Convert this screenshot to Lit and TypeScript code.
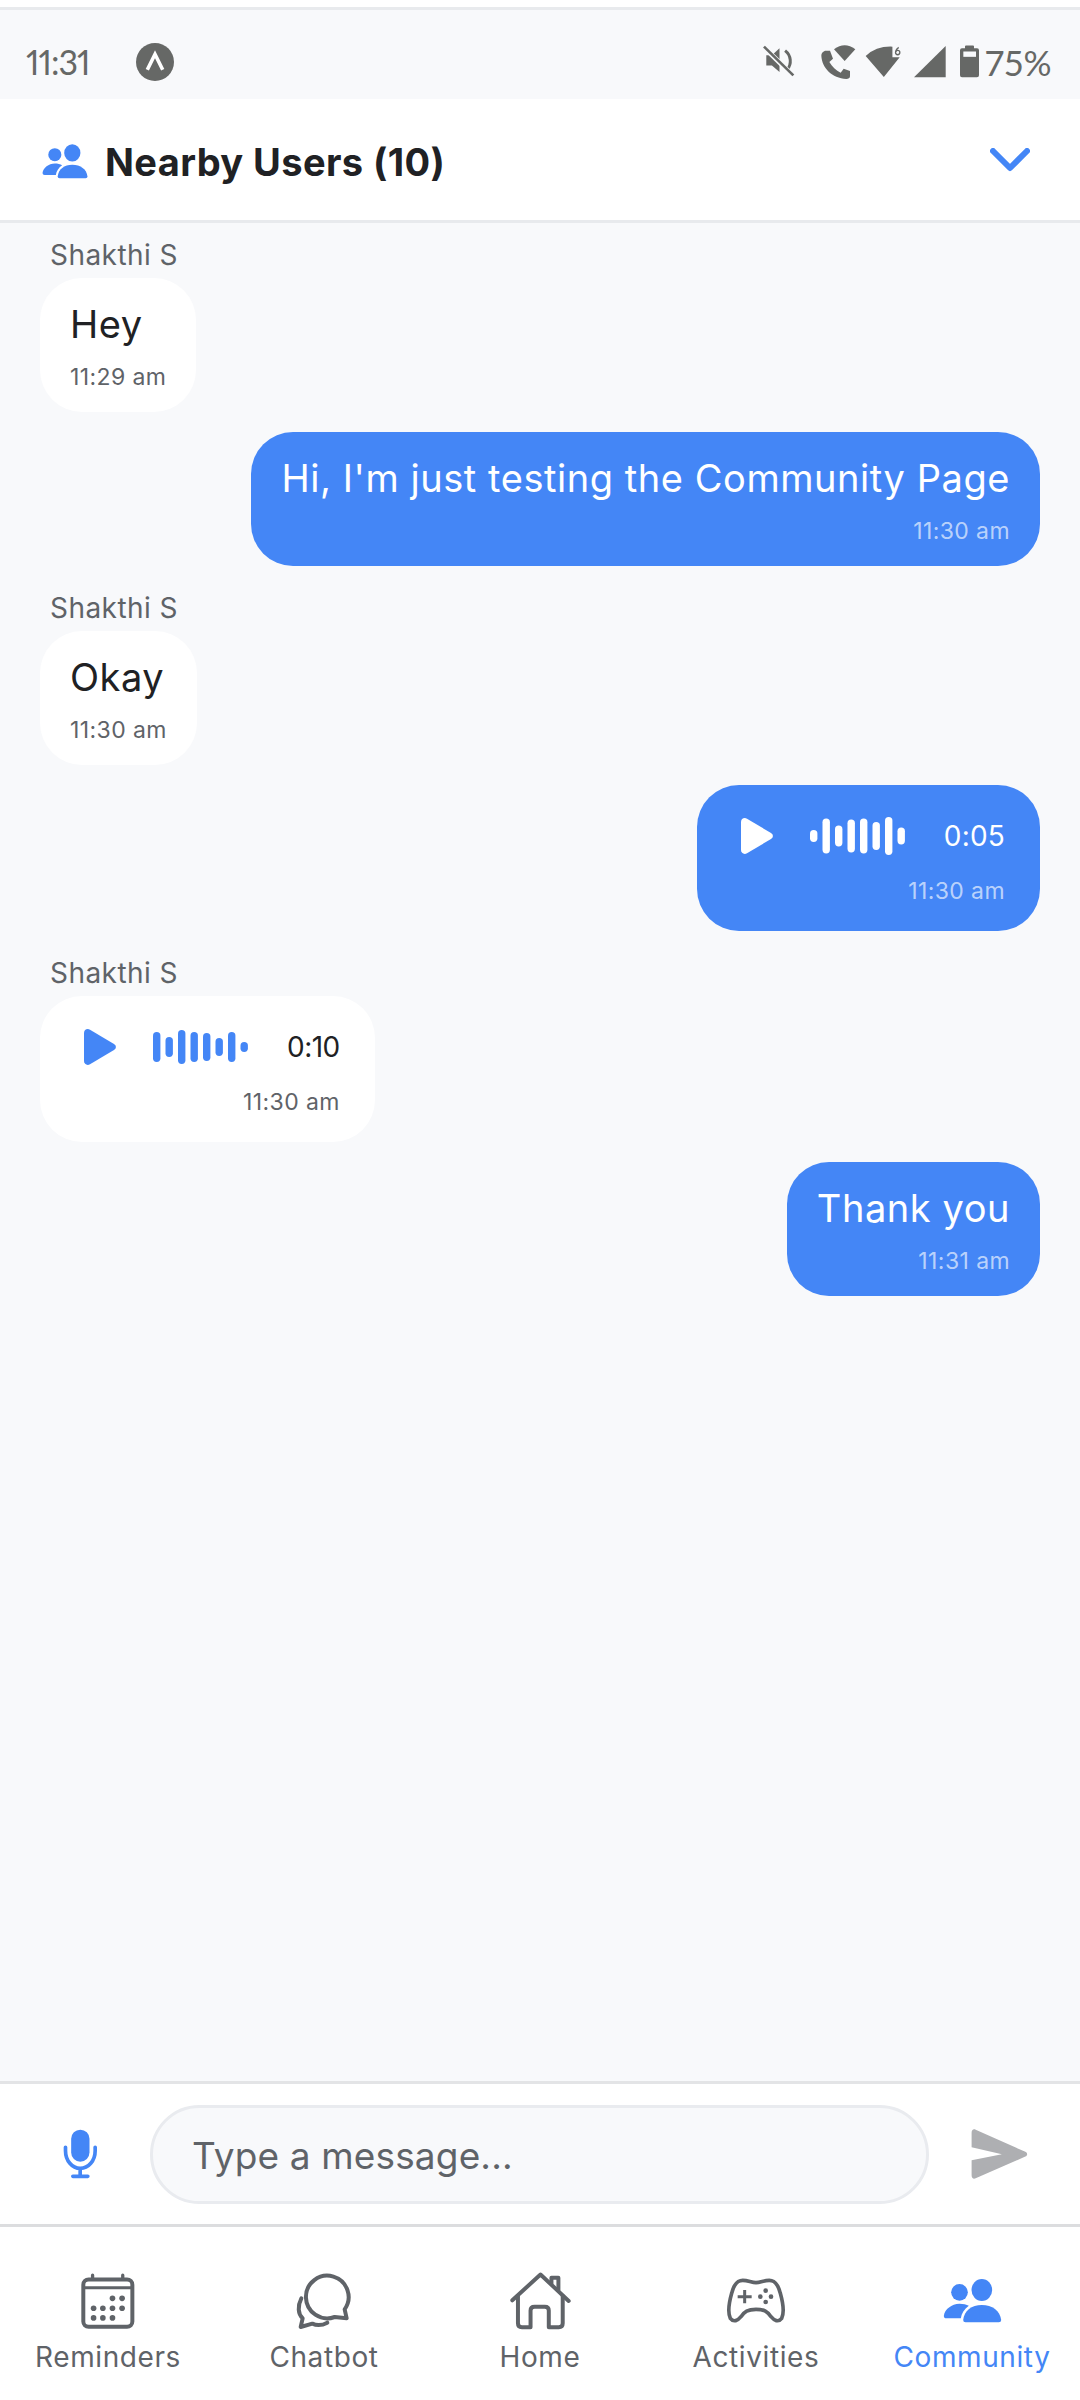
import { LitElement, html, css, svg } from 'lit';
import { customElement } from 'lit/decorators.js';

const BLUE = '#4486f6';

// icons are drawn in 3x crop units, so sizes below are box / 3
const usersIcon = (w: number, h: number) => html`
  <svg width=${w} height=${h} viewBox="1165 655 176 132" fill=${BLUE}>
    <circle cx="1214" cy="695" r="25"></circle>
    <ellipse cx="1281" cy="688" rx="31" ry="33"></ellipse>
    <path d="M1225 778C1228 750 1250 733 1281 733C1312 733 1336 750 1339 778Q1339 785 1332 785H1232Q1225 785 1225 778Z"></path>
    <path d="M1167 765C1170 745 1190 730 1214 729C1225 729 1235 731 1242 735C1228 745 1220 758 1218 773H1175Q1167 773 1167 765Z"></path>
  </svg>`;

const playIcon = (color: string) => html`
  <svg width="32" height="36" viewBox="0 0 32 36" fill=${color}>
    <path d="M0 4C0 1 3-1 6 .7L30 15C32.5 16.5 32.5 19.5 30 21L6 35.3C3 37 0 35 0 32Z"></path>
  </svg>`;

const waveIcon = (color: string, bars: number[]) => html`
  <svg width="96" height="40" viewBox="0 0 96 40" fill=${color}>
    ${bars.map(
      (h, i) => svg`<rect x=${i * 12.5} y=${20 - h / 2} width="7.4" height=${h} rx="3.7"></rect>`
    )}
  </svg>`;

const tabIcons = {
  reminders: html`
    <svg width="58" height="60" viewBox="225 630 175 180">
      <rect x="238" y="655" width="148" height="143" rx="16" fill="none" stroke="#5f6368" stroke-width="12"></rect>
      <path d="M238 680H386" stroke="#5f6368" stroke-width="9"></path>
      <path d="M266 642V655M357 642V655" stroke="#5f6368" stroke-width="10" stroke-linecap="round"></path>
      <g fill="#5f6368">
        ${[
          [326, 712], [355, 712], [269, 742], [297, 742], [326, 742],
          [355, 742], [269, 771], [297, 771], [326, 771],
        ].map(([x, y]) => svg`<circle cx=${x} cy=${y} r="8.5"></circle>`)}
      </g>
    </svg>`,
  chatbot: html`
    <svg width="60" height="60" viewBox="850 630 180 180" fill="none" stroke="#5f6368" stroke-width="12" stroke-linejoin="round" stroke-linecap="round">
      <path d="M1002 745A64 64 0 1 0 972 768L1008 772Z"></path>
      <path d="M872 712C860 735 862 760 876 772L870 798L905 788C920 795 935 793 950 785"></path>
    </svg>`,
  home: html`
    <svg width="63" height="60" viewBox="70 15 190 180" fill="none" stroke="#5f6368" stroke-width="12" stroke-linejoin="round" stroke-linecap="round">
      <path d="M80 103L165 25L250 105"></path>
      <path d="M97 90V172Q97 184 109 184H135V134Q135 122 147 122H178Q190 122 190 134V184H220Q232 184 232 172V90"></path>
      <path d="M198 52V35H219V72"></path>
    </svg>`,
  activities: html`
    <svg width="60" height="48" viewBox="535 652 180 142" fill="none" stroke="#5f6368" stroke-linejoin="round">
      <path stroke-width="11" d="M578 662C595 658 610 668 625 668C640 668 655 658 672 662C685 665 693 680 698 700C705 725 712 755 702 775C692 788 680 782 670 770C660 755 650 748 625 748C600 748 590 755 580 770C570 782 558 788 548 775C538 755 545 725 552 700C557 680 565 665 578 662Z"></path>
      <path stroke-width="9" d="M570 710H612M591 690V730"></path>
      <g fill="#5f6368" stroke="none">
        <circle cx="654" cy="692" r="7"></circle><circle cx="638" cy="710" r="7"></circle>
        <circle cx="670" cy="710" r="7"></circle><circle cx="654" cy="726" r="7"></circle>
      </g>
    </svg>`,
};

@customElement('app-root')
export class AppRoot extends LitElement {
  static styles = css`
    :host {
      display: flex;
      flex-direction: column;
      height: 2400px;
      background: #f8f9fb;
      font-family: Inter, 'Noto Sans', sans-serif;
      color: #202124;
    }

    .top-line {
      height: 7px;
      background: #fff;
      border-bottom: 3px solid #e8eaed;
    }

    .status {
      box-sizing: border-box;
      height: 89px;
      display: flex;
      align-items: center;
      padding: 14px 28px 0 26px;
      color: #666866;
      font-family: Lato, sans-serif;
      font-size: 34px;
    }

    .clock {
      width: 59px;
      font-variant-numeric: proportional-nums;
      letter-spacing: -1px;
      white-space: nowrap;
    }

    .status .expo {
      margin-left: 51px;
    }

    .status .icons {
      margin-left: auto;
      display: flex;
      align-items: center;
    }

    .status svg {
      display: block;
      flex: none;
    }

    .phone {
      margin-left: 24px;
    }

    .wifi {
      margin-left: 9px;
    }

    .signal {
      margin-left: 12px;
    }

    .battery {
      margin-left: 14px;
    }

    .pct {
      margin-left: 6px;
      font-size: 35px;
      letter-spacing: 0.4px;
      font-variant-numeric: proportional-nums;
    }

    .header {
      height: 121px;
      background: #fff;
      border-bottom: 3px solid #e8eaed;
      display: flex;
      align-items: center;
      padding: 0 50px 0 42px;
    }

    .header svg:first-child {
      margin-top: 3px;
    }

    .header h1 {
      margin: 5px 0 0 17px;
      font-size: 38px;
      font-weight: 700;
      letter-spacing: 0.4px;
    }

    .header .chev {
      margin-left: auto;
    }

    .messages {
      flex: 1;
      min-height: 0;
      display: flex;
      flex-direction: column;
      padding: 10px 40px 0;
    }

    .name {
      margin: 3px 0 4px 10px;
      height: 38px;
      line-height: 38px;
      font-size: 28px;
      letter-spacing: 0.45px;
      color: #5f6368;
    }

    .bubble {
      box-sizing: border-box;
      align-self: flex-start;
      background: #fff;
      border-radius: 42px;
      padding: 22px 30px 0;
      height: 134px;
      margin-bottom: 20px;
    }

    .bubble.mine {
      align-self: flex-end;
      background: #4486f6;
      color: #fff;
    }

    .text {
      font-size: 38px;
      line-height: 48px;
      letter-spacing: 0.55px;
      white-space: nowrap;
    }

    .stamp {
      margin-top: 14px;
      font-size: 23px;
      line-height: 30px;
      letter-spacing: 0.4px;
      color: #5f6368;
      white-space: nowrap;
    }

    .mine .stamp {
      color: rgba(255, 255, 255, 0.65);
      text-align: right;
    }

    .bubble.audio {
      height: 146px;
      padding: 31px 35px 0 44px;
    }

    .player {
      display: flex;
      align-items: center;
      height: 40px;
    }

    .player .wave {
      margin-left: 37px;
    }

    .player svg {
      display: block;
    }

    .player .dur {
      margin-left: 38px;
      font-size: 28px;
      letter-spacing: 0.2px;
    }

    .player .dur.tight {
      letter-spacing: -0.5px;
    }

    .audio .stamp {
      margin-top: 20px;
      text-align: right;
    }

    .composer {
      height: 146px;
      flex: none;
      box-sizing: border-box;
      background: #fff;
      border-top: 3px solid #e3e4e6;
      border-bottom: 3px solid #dcdddf;
      display: flex;
      align-items: center;
      padding: 0 52px 0 63px;
    }

    .composer svg {
      display: block;
    }

    .field {
      box-sizing: border-box;
      margin-left: 52px;
      width: 779px;
      height: 99px;
      border-radius: 50px;
      border: 3px solid #e9ebef;
      background: #f8f9fb;
      padding: 3px 0 0 39px;
      display: flex;
      align-items: center;
      font-size: 37px;
      letter-spacing: 0.15px;
      color: #5f6368;
    }

    .send {
      margin-left: auto;
    }

    .tabs {
      flex: none;
      height: 173px;
      background: #fff;
      display: grid;
      grid-template-columns: repeat(5, 216px);
    }

    .tab {
      display: flex;
      flex-direction: column;
      align-items: center;
      font-size: 28px;
      color: #5f6368;
      white-space: nowrap;
    }

    .tab .slot {
      height: 60px;
      margin-top: 44px;
      display: flex;
      align-items: center;
      justify-content: center;
    }

    .tab svg {
      display: block;
    }

    .tab span {
      margin-top: 9px;
      line-height: 34px;
      letter-spacing: 0.6px;
    }

    .tab.active {
      color: #4486f6;
    }
  `;

  statusIcons() {
    return html`
      <div class="icons">
        <svg width="33" height="33" viewBox="195 143 100 100" fill="#666866">
          <path d="M205 174H222L245 153V225L222 205H205Z"></path>
          <path d="M262 160A40 40 0 0 1 268 218" fill="none" stroke="#666866" stroke-width="9"></path>
          <path d="M200 152L284 234" stroke="#f8f9fb" stroke-width="15"></path>
          <path d="M198 148L287 235" stroke="#666866" stroke-width="8"></path>
        </svg>
        <svg class="phone" width="36" height="36" viewBox="362 135 108 108" fill="#666866">
          <path d="M404 151Q436 126 468 151L436 186Z"></path>
          <path d="M366 170C366 162 372 155 380 155H392L401 179L390 189C398 203 410 214 424 221L433 209L452 216V232C452 238 447 240 441 240C398 236 368 208 366 170Z"></path>
        </svg>
        <svg class="wifi" width="37" height="33" viewBox="495 135 112 100" fill="#666866">
          <path d="M497 168Q530 138 578 140V172H600L552 232Z"></path>
          <circle cx="594" cy="158" r="6.5" fill="none" stroke="#666866" stroke-width="4"></circle>
          <path d="M597 142Q590 146 588 156" fill="none" stroke="#666866" stroke-width="4"></path>
        </svg>
        <svg class="signal" width="32" height="32" viewBox="643 139 96 96" fill="#666866">
          <path d="M643 233L738 139V233Z"></path>
        </svg>
        <svg class="battery" width="19" height="33" viewBox="780 139 57 98">
          <path d="M795 148V143Q795 140 798 140H819Q822 140 822 143V148H831Q837 148 837 154V229Q837 235 831 235H786Q780 235 780 229V154Q780 148 786 148Z" fill="#666866"></path>
          <rect x="790" y="158" width="38" height="16" fill="#f8f9fb"></rect>
        </svg>
        <span class="pct">75%</span>
      </div>
    `;
  }

  render() {
    return html`
      <div class="top-line"></div>
      <div class="status">
        <span class="clock">11:31</span>
        <svg class="expo" width="38" height="38" viewBox="0 0 37 37">
          <circle cx="18.5" cy="18.5" r="18.5" fill="#666866"></circle>
          <path d="M11 26L18.5 11L26 26" fill="none" stroke="#fff" stroke-width="3.5"></path>
        </svg>
        ${this.statusIcons()}
      </div>

      <div class="header">
        ${usersIcon(46, 35)}
        <h1>Nearby Users (10)</h1>
        <svg class="chev" width="40" height="24" viewBox="0 0 40 24" fill="none" stroke=${BLUE} stroke-width="6" stroke-linecap="round" stroke-linejoin="round">
          <path d="M3 3L20 20L37 3"></path>
        </svg>
      </div>

      <div class="messages">
        <div class="name">Shakthi S</div>
        <div class="bubble">
          <div class="text">Hey</div>
          <div class="stamp">11:29 am</div>
        </div>
        <div class="bubble mine">
          <div class="text">Hi, I'm just testing the Community Page</div>
          <div class="stamp">11:30 am</div>
        </div>
        <div class="name">Shakthi S</div>
        <div class="bubble">
          <div class="text">Okay</div>
          <div class="stamp">11:30 am</div>
        </div>
        <div class="bubble mine audio">
          <div class="player">
            ${playIcon('#fff')}
            <span class="wave">${waveIcon('#fff', [12, 35, 21, 33, 35, 28, 38, 17])}</span>
            <span class="dur">0:05</span>
          </div>
          <div class="stamp">11:30 am</div>
        </div>
        <div class="name">Shakthi S</div>
        <div class="bubble audio">
          <div class="player">
            ${playIcon(BLUE)}
            <span class="wave">${waveIcon(BLUE, [30, 20, 34, 30, 28, 18, 30, 10])}</span>
            <span class="dur tight">0:10</span>
          </div>
          <div class="stamp">11:30 am</div>
        </div>
        <div class="bubble mine">
          <div class="text">Thank you</div>
          <div class="stamp">11:31 am</div>
        </div>
      </div>

      <div class="composer">
        <svg width="35" height="50" viewBox="183 210 100 150">
          <rect x="205" y="212" width="55" height="96" rx="27.5" fill=${BLUE}></rect>
          <path d="M188 265V275C188 305 208 328 232 328C257 328 277 305 277 275V265M232 328V352M210 352H255" fill="none" stroke=${BLUE} stroke-width="11" stroke-linecap="round"></path>
        </svg>
        <div class="field">Type a message...</div>
        <svg class="send" width="57" height="50" viewBox="1254 211 164 147" fill="#aeafb2">
          <path d="M1254 222C1254 214 1259 210 1266 213L1412 278C1419 281 1419 289 1412 292L1266 356C1259 359 1254 355 1254 347V303L1343 285L1254 265Z"></path>
        </svg>
      </div>

      <div class="tabs">
        <div class="tab"><div class="slot">${tabIcons.reminders}</div><span>Reminders</span></div>
        <div class="tab"><div class="slot">${tabIcons.chatbot}</div><span>Chatbot</span></div>
        <div class="tab"><div class="slot">${tabIcons.home}</div><span>Home</span></div>
        <div class="tab"><div class="slot">${tabIcons.activities}</div><span>Activities</span></div>
        <div class="tab active"><div class="slot">${usersIcon(59, 44)}</div><span>Community</span></div>
      </div>
    `;
  }
}
